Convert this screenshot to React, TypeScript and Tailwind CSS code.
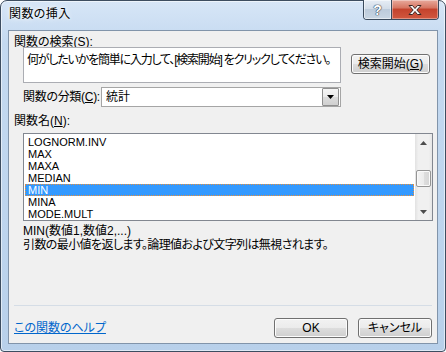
const items = ['LOGNORM.INV', 'MAX', 'MAXA', 'MEDIAN', 'MIN', 'MINA', 'MODE.MULT'];

const btn =
  'flex items-center justify-center h-[20px] rounded-[3px] border border-[#707070] bg-[linear-gradient(180deg,#f2f2f2_0%,#ebebeb_50%,#dddddd_50%,#cfcfcf_100%)] shadow-[inset_0_0_0_1px_#fcfcfc] text-[12px] leading-[14px] text-black whitespace-nowrap';

const TitleButtons = () => (
  <div className="-mt-[1px] mr-[6px] flex h-[20px] overflow-hidden rounded-b-[4px] border border-t-0 border-[#3a4a5c]">
    <div className="flex w-[28px] items-center justify-center border-r border-[#3a4a5c] bg-[linear-gradient(180deg,#e6edf5_0%,#d3dde8_45%,#bccbdb_50%,#c9d6e3_100%)] shadow-[inset_0_0_0_1px_rgba(255,255,255,0.5)]">
      <span className="text-[14px] leading-[14px] font-bold text-white [text-shadow:0_0_1px_#2c3a4a,0_0_1px_#2c3a4a,0_0_1px_#2c3a4a]">?</span>
    </div>
    <div className="flex w-[46px] items-center justify-center bg-[linear-gradient(180deg,#e8aa9c_0%,#d77763_40%,#c4432d_50%,#d1583f_100%)] shadow-[inset_0_0_0_1px_rgba(255,255,255,0.35)]">
      <svg width="16" height="12" viewBox="0 0 16 12">
        <path
          d="M2 1.5h3.5L8 4.5l2.5-3H14L9.8 6l4.2 4.5h-3.5L8 7.5l-2.5 3H2L6.2 6z"
          fill="#ffffff"
          stroke="#3b2622"
          strokeWidth="1"
          strokeLinejoin="round"
        />
      </svg>
    </div>
  </div>
);

const Scrollbar = () => (
  <div className="flex w-[17px] flex-col bg-[linear-gradient(90deg,#e2e2e2_0%,#f0f0f0_20%,#f0f0f0_80%,#e6e6e6_100%)]">
    <div className="flex h-[17px] items-center justify-center">
      <svg width="7" height="4" viewBox="0 0 7 4">
        <path d="M0 4L3.5 0L7 4z" fill="#4d4d4d" />
      </svg>
    </div>
    <div className="h-[19px]" />
    <div className="mx-[1px] h-[17px] rounded-[2px] border border-[#959595] bg-[linear-gradient(90deg,#f4f4f4_0%,#ececec_50%,#dedede_51%,#d6d6d6_100%)] shadow-[inset_0_0_0_1px_#fafafa]" />
    <div className="flex-1" />
    <div className="flex h-[17px] items-center justify-center">
      <svg width="7" height="4" viewBox="0 0 7 4">
        <path d="M0 0L7 0L3.5 4z" fill="#4d4d4d" />
      </svg>
    </div>
  </div>
);

export default function App() {
  return (
    <div className="h-[352px] w-[446px] bg-white font-['Liberation_Sans','Noto_Sans_CJK_JP',sans-serif] text-black [font-feature-settings:'palt']">
      <div className="flex h-full w-full flex-col rounded-t-[7px] rounded-b-[4px] border border-[#3d4d60] bg-[linear-gradient(180deg,#d7e6f7_0%,#c4d9f0_12%,#bed5ee_60%,#b8d0ea_100%)] shadow-[inset_0_0_0_1px_rgba(255,255,255,0.55)]">
        <div className="flex h-[29px] items-start">
          <div className="whitespace-nowrap pl-[8px] pt-[6px] text-[12px] leading-[14px] tracking-[0.4px] [text-shadow:0_0_6px_#ffffff,0_0_3px_#ffffff]">
            関数の挿入
          </div>
          <div className="ml-auto">
            <TitleButtons />
          </div>
        </div>

        <div className="mx-[7px] mb-[7px] flex flex-1 flex-col whitespace-nowrap border border-[#8194aa] bg-[#f0f0f0] pt-[4px] pb-[5px] text-[12px]">
          <div className="h-[12px] pl-[5px] leading-[14px]">
            関数の検索(<span className="underline">S</span>):
          </div>

          <div className="flex items-start pl-[14px]">
            <div className="h-[36px] w-[318px] overflow-hidden border border-[#abadb3] bg-white pl-[3px] pt-[5px] leading-[14px] tracking-[-1.2px]">
              何がしたいかを簡単に入力して、[検索開始] をクリックしてください。
            </div>
            <div className={`${btn} ml-[10px] mt-[7px] w-[79px]`}>
              検索開始(<span className="underline">G</span>)
            </div>
          </div>

          <div className="mt-[4px] flex h-[20px] items-center pl-[14px]">
            <div className="w-[78px] leading-[14px] tracking-[-0.3px]">
              関数の分類(<span className="underline">C</span>):
            </div>
            <div className="flex h-[20px] w-[240px] items-center border border-[#a5a5a5] bg-white">
              <div className="flex-1 pl-[4px] leading-[14px]">統計</div>
              <div className="mr-[1px] flex h-[18px] w-[17px] items-center justify-center rounded-[1px] border border-[#8f8f8f] bg-[linear-gradient(180deg,#f5f5f5_0%,#ebebeb_50%,#dcdcdc_51%,#d0d0d0_100%)]">
                <svg width="7" height="4" viewBox="0 0 7 4">
                  <path d="M0 0L7 0L3.5 4z" fill="#000000" />
                </svg>
              </div>
            </div>
          </div>

          <div className="mt-[7px] h-[14px] pl-[5px] leading-[14px]">
            関数名(<span className="underline">N</span>):
          </div>

          <div className="ml-[14px] mt-[5px] flex h-[88px] w-[410px] border border-[#828790] bg-white">
            <div className="flex-1 pl-[1px] pr-[1px] pt-[2px] font-['Liberation_Sans',sans-serif] text-[11px]">
              {items.map((it) => (
                <div
                  key={it}
                  className={
                    it === 'MIN'
                      ? 'h-[12px] border border-dotted border-[#e8903c] bg-[#3399ff] pl-[2px] leading-[10px] text-white'
                      : 'h-[12px] pl-[3px] leading-[12px]'
                  }
                >
                  {it}
                </div>
              ))}
            </div>
            <Scrollbar />
          </div>

          <div className="mt-[3px] pl-[14px] leading-[14px]">
            <div>MIN(数値1,数値2,...)</div>
            <div className="tracking-[-0.6px]">引数の最小値を返します。論理値および文字列は無視されます。</div>
          </div>

          <div className="mx-[5px] mt-auto h-px bg-[#d5dde6]" />

          <div className="mt-[12px] flex h-[20px] items-center px-[5px]">
            <a href="#" className="leading-[14px] text-[#0066cc] underline">
              この関数のヘルプ
            </a>
            <div className={`${btn} ml-auto w-[74px] border-[#3c7fb1] shadow-[inset_0_0_0_1px_#c4e3f7]`}>OK</div>
            <div className={`${btn} ml-[10px] w-[74px]`}>キャンセル</div>
          </div>
        </div>
      </div>
    </div>
  );
}
